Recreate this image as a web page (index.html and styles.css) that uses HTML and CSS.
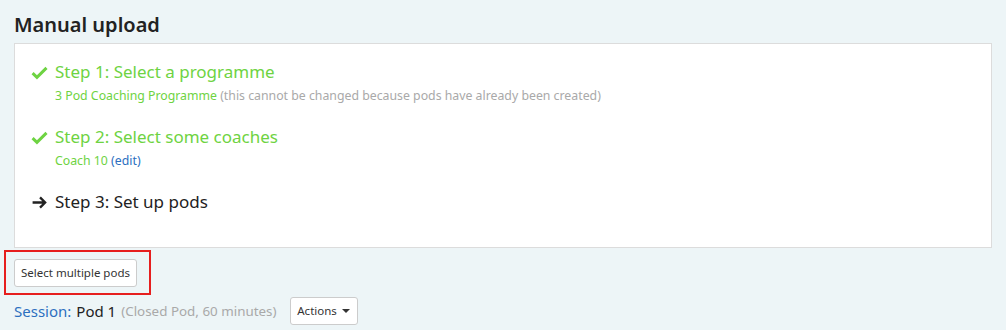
FILE: index.html
```html
<!DOCTYPE html>
<html lang="en">
<head>
    <meta charset="UTF-8">
    <title>Manual upload</title>
    <link rel="stylesheet" href="styles.css">
</head>
<body>
    <div class="page">
        <h2 class="title">Manual upload</h2>

        <div class="steps">
            <div class="step done">
                <div class="step-head">
                    <svg class="icon" viewBox="0 0 16 16"><path d="M1.5 8.6 L5.6 12.6 L14.6 3.6" fill="none" stroke="currentColor" stroke-width="2.8"/></svg>
                    <span>Step 1: Select a programme</span>
                </div>
                <div class="step-detail">3 Pod Coaching Programme <span class="muted">(this cannot be changed because pods have already been created)</span></div>
            </div>

            <div class="step done">
                <div class="step-head">
                    <svg class="icon" viewBox="0 0 16 16"><path d="M1.5 8.6 L5.6 12.6 L14.6 3.6" fill="none" stroke="currentColor" stroke-width="2.8"/></svg>
                    <span>Step 2: Select some coaches</span>
                </div>
                <div class="step-detail">Coach 10 <a href="#" class="edit">(edit)</a></div>
            </div>

            <div class="step current">
                <div class="step-head">
                    <svg class="icon" viewBox="0 0 16 16"><path d="M1.5 8 H13 M8.5 3.2 L13.3 8 L8.5 12.8" fill="none" stroke="currentColor" stroke-width="2.2"/></svg>
                    <span>Step 3: Set up pods</span>
                </div>
            </div>
        </div>

        <div class="highlight">
            <button class="btn btn-multi">Select multiple pods</button>
        </div>

        <div class="session">
            <span class="session-label">Session:</span>
            <span class="session-name">Pod 1</span>
            <span class="muted session-meta">(Closed Pod, 60 minutes)</span>
            <button class="btn btn-actions">Actions <span class="caret"></span></button>
        </div>
    </div>
</body>
</html>
```

FILE: styles.css
```css
body {
    margin: 0;
    background-color: #edf5f7;
    font-family: 'Noto Sans', sans-serif;
    color: #222;
}

.page {
    padding: 12px 14px 0 14px;
    width: 978px;
}

.title {
    font-size: 20px;
    font-weight: 600;
    margin: 0 0 5px 0;
    line-height: 26px;
    color: #222;
}

/* Steps panel */
.steps {
    background-color: #fff;
    border: 1px solid #dcdcdc;
    padding: 16px 16px 0 16px;
    height: 187px;
}

.step {
    margin-bottom: 20px;
}

.step-head {
    display: flex;
    align-items: center;
    gap: 7px;
    font-size: 17px;
    line-height: 24px;
}

.icon {
    width: 17px;
    height: 17px;
}

.done {
    color: #6ed342;
}

.current {
    color: #222;
}

.step-detail {
    font-size: 12.3px;
    line-height: 18px;
    margin-top: 3px;
    padding-left: 24px;
}

.muted {
    color: #a9a9a9;
}

.edit {
    color: #2c6fbf;
    text-decoration: none;
}

/* Highlighted button */
.highlight {
    box-sizing: border-box;
    border: 2px solid #e61e1e;
    margin: 2px 0 0 -10px;
    padding: 7px 0 6px 8px;
    width: 147px;
}

.btn {
    font-family: 'Noto Sans', sans-serif;
    font-size: 11.5px;
    color: #333;
    background-color: #fff;
    border: 1px solid #ccc;
    border-radius: 3px;
    line-height: 14px;
    white-space: nowrap;
    display: flex;
    align-items: center;
    justify-content: center;
}

.btn-multi {
    width: 123px;
    height: 28px;
}

.session {
    display: flex;
    align-items: center;
    gap: 5px;
    margin-top: 2px;
    height: 28px;
    font-size: 15px;
}

.session-label {
    color: #2c6fbf;
}

.session-name {
    color: #222;
}

.session-meta {
    font-size: 13.4px;
}

.btn-actions {
    margin-left: 8px;
    width: 68px;
    height: 28px;
}

.caret {
    display: inline-block;
    border-top: 4px solid #333;
    border-left: 4px solid transparent;
    border-right: 4px solid transparent;
    margin-left: 5px;
}
```
